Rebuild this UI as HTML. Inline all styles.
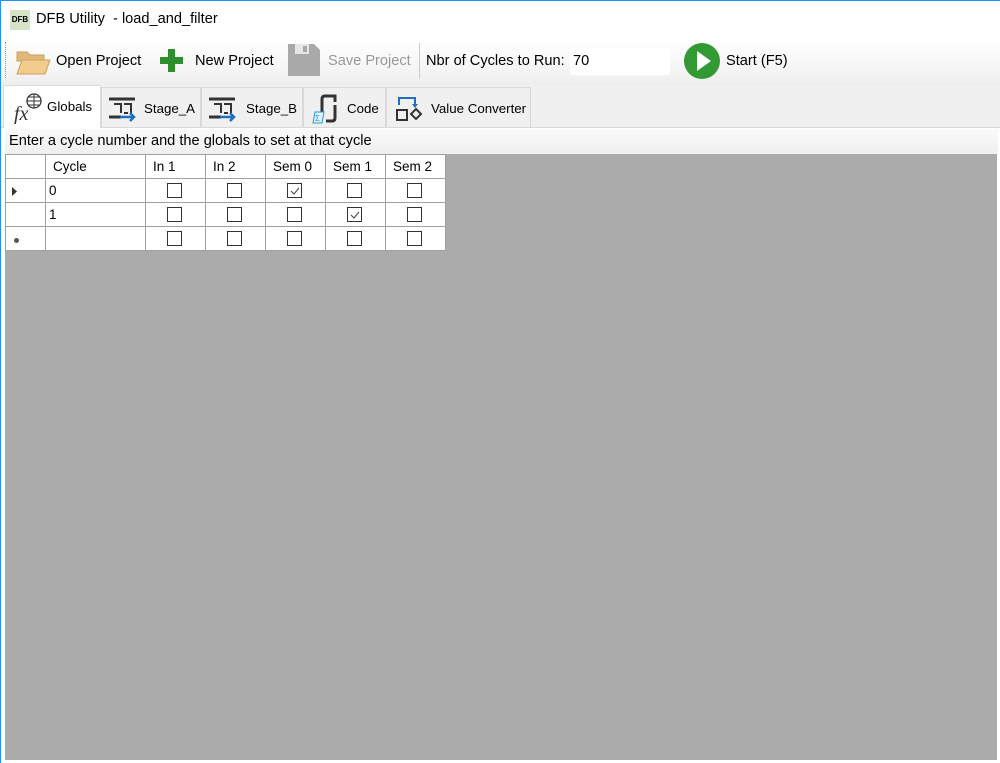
<!DOCTYPE html>
<html><head><style>
*{margin:0;padding:0;box-sizing:border-box}
body{width:1000px;height:763px;position:relative;background:#fff;font-family:"Liberation Sans",sans-serif;overflow:hidden;color:#000}
.a{position:absolute}
.t{font-size:14.6px;white-space:nowrap}
.tab{position:absolute;top:87px;height:40px;border:1px solid #d9d9d9;border-bottom:none;background:#f0f0f0;font-size:13.3px}
.cb{position:absolute;width:15px;height:15px;border:1px solid #333;background:#fff}
table{border-collapse:collapse;position:absolute;left:5px;top:154px;background:#fff;font-size:13.5px;table-layout:fixed;width:441px}
td{border:1px solid #a0a0a0;height:24px;padding:0;position:relative;white-space:nowrap}
</style></head><body>
<div class="a" style="left:0;top:0;width:1000px;height:1px;background:#1e90ff"></div>
<div class="a" style="left:0;top:0;width:1px;height:763px;background:#1e90ff"></div>
<div class="a" style="left:10px;top:10px;width:20px;height:20px;background:#d5e3c8;font-size:8px;font-weight:bold;line-height:20px;text-align:center">DFB</div>
<div class="a t" style="left:36px;top:11px">DFB Utility &nbsp;- load_and_filter</div>
<div class="a" style="left:1px;top:38px;width:999px;height:47px;background:linear-gradient(#fff,#f8f8f8 50%,#eeeeee)"></div>
<div class="a" style="left:5px;top:42px;width:1px;height:36px;border-left:1px dotted #999"></div>
<svg class="a" style="left:15px;top:46px" width="36" height="30"><path d="M2 6h10l3 3h14v6H2z" fill="#e3b979" stroke="#c9a060"/><path d="M2 28l5-14h28l-5 14z" fill="#f2cc8c" stroke="#c9a060"/></svg>
<div class="a t" style="left:56px;top:53px">Open Project</div>
<svg class="a" style="left:159px;top:48px" width="25" height="25"><path d="M9 1h7v8h8v7h-8v8H9v-8H1V9h8z" fill="#2f8f2f"/></svg>
<div class="a t" style="left:195px;top:53px">New Project</div>
<svg class="a" style="left:287px;top:43px" width="34" height="34"><path d="M1 1h26l6 6v26H1z" fill="#a9a9a9"/><rect x="8" y="1" width="14" height="10" fill="#e6e6e6"/><rect x="16" y="3" width="4" height="6" fill="#a9a9a9"/></svg>
<div class="a t" style="left:328px;top:53px;color:#999">Save Project</div>
<div class="a" style="left:419px;top:43px;width:1px;height:36px;background:#ccc"></div>
<div class="a t" style="left:426px;top:53px">Nbr of Cycles to Run:</div>
<div class="a" style="left:570px;top:48px;width:100px;height:27px;background:#fff"></div>
<div class="a t" style="left:573px;top:53px">70</div>
<svg class="a" style="left:684px;top:43px" width="36" height="36"><circle cx="18" cy="18" r="18" fill="#339933"/><path d="M13 8l14 10-14 10z" fill="#fff"/></svg>
<div class="a t" style="left:726px;top:53px">Start (F5)</div>
<div class="a" style="left:1px;top:85px;width:999px;height:42px;background:#f0f0f0"></div>
<div class="tab" style="left:101px;width:100px"><svg class="a" style="left:6px;top:7px" width="30" height="28"><path d="M1 4h26M1 22h12" stroke="#333" stroke-width="3"/><path d="M6 9h7v9M16 9h7v9M16 18h4" stroke="#333" stroke-width="2" fill="none"/><path d="M12 22h14m-4-4l4 4-4 4" stroke="#1e6fc0" stroke-width="2.5" fill="none"/></svg><span class="a" style="left:42px;top:13px">Stage_A</span></div>
<div class="tab" style="left:201px;width:102px"><svg class="a" style="left:6px;top:7px" width="30" height="28"><path d="M1 4h26M1 22h12" stroke="#333" stroke-width="3"/><path d="M6 9h7v9M16 9h7v9M16 18h4" stroke="#333" stroke-width="2" fill="none"/><path d="M12 22h14m-4-4l4 4-4 4" stroke="#1e6fc0" stroke-width="2.5" fill="none"/></svg><span class="a" style="left:44px;top:13px">Stage_B</span></div>
<div class="tab" style="left:303px;width:83px"><svg class="a" style="left:8px;top:5px" width="30" height="32"><path d="M10 24V6c0-2 1-3 3-3h10v6" stroke="#333" stroke-width="3" fill="none"/><path d="M23 12v13c0 2-1 3-3 3h-6" stroke="#333" stroke-width="3" fill="none"/><path d="M3 19h9l-2 11H1z" fill="#dff2fb" stroke="#2a9ad6"/><text x="3" y="28" font-size="8" fill="#2a9ad6">Σ</text></svg><span class="a" style="left:43px;top:13px">Code</span></div>
<div class="tab" style="left:386px;width:145px"><svg class="a" style="left:8px;top:7px" width="30" height="28"><path d="M4 10V3h16v7" stroke="#1e6fc0" stroke-width="2" fill="none"/><path d="M17 9l3 4 3-4z" fill="#1e6fc0"/><rect x="2" y="15" width="10" height="10" fill="none" stroke="#333" stroke-width="2"/><path d="M21 14l5 5-5 5-5-5z" fill="none" stroke="#333" stroke-width="2"/></svg><span class="a" style="left:44px;top:13px">Value Converter</span></div>
<div class="tab" style="left:3px;top:85px;width:98px;height:43px;background:#fff;z-index:2"><svg class="a" style="left:8px;top:6px" width="32" height="32"><text x="2" y="28" font-family="Liberation Serif" font-style="italic" font-size="20" fill="#333">fx</text><circle cx="22" cy="9" r="7" fill="none" stroke="#333" stroke-width="1.3"/><path d="M15 9h14M22 2v14M17 5h10M17 13h10" stroke="#333" stroke-width="1"/></svg><span class="a" style="left:43px;top:13px">Globals</span></div>
<div class="a" style="left:1px;top:127px;width:999px;height:636px;background:#fff;border-top:1px solid #d9d9d9"></div>
<div class="a" style="left:5px;top:129px;width:993px;height:25px;background:linear-gradient(#fafafa,#efefef)"></div>
<div class="a t" style="left:9px;top:133px">Enter a cycle number and the globals to set at that cycle</div>
<div class="a" style="left:5px;top:154px;width:992px;height:606px;background:#ababab"></div>
<table>
<tr><td style="width:40px"></td><td style="width:100px;padding-left:7px">Cycle</td><td style="width:60px;padding-left:7px">In 1</td><td style="width:60px;padding-left:7px">In 2</td><td style="width:60px;padding-left:7px">Sem 0</td><td style="width:60px;padding-left:7px">Sem 1</td><td style="width:60px;padding-left:7px">Sem 2</td></tr>
<tr><td><svg class="a" style="left:6px;top:8px" width="6" height="9"><path d="M0 0l5 4.5L0 9z" fill="#333"/></svg></td><td style="padding-left:3px">0</td><td><div class="cb" style="left:21px;top:4px"></div></td><td><div class="cb" style="left:21px;top:4px"></div></td><td><div class="cb" style="left:21px;top:4px"><svg width="13" height="13"><path d="M3 7l3 3 5-6" stroke="#444" fill="none"/></svg></div></td><td><div class="cb" style="left:21px;top:4px"></div></td><td><div class="cb" style="left:21px;top:4px"></div></td></tr>
<tr><td></td><td style="padding-left:3px">1</td><td><div class="cb" style="left:21px;top:4px"></div></td><td><div class="cb" style="left:21px;top:4px"></div></td><td><div class="cb" style="left:21px;top:4px"></div></td><td><div class="cb" style="left:21px;top:4px"><svg width="13" height="13"><path d="M3 7l3 3 5-6" stroke="#444" fill="none"/></svg></div></td><td><div class="cb" style="left:21px;top:4px"></div></td></tr>
<tr><td><div class="a" style="left:8px;top:11px;width:5px;height:5px;border-radius:50%;background:#555"></div></td><td></td><td><div class="cb" style="left:21px;top:4px"></div></td><td><div class="cb" style="left:21px;top:4px"></div></td><td><div class="cb" style="left:21px;top:4px"></div></td><td><div class="cb" style="left:21px;top:4px"></div></td><td><div class="cb" style="left:21px;top:4px"></div></td></tr>
</table>
</body></html>
